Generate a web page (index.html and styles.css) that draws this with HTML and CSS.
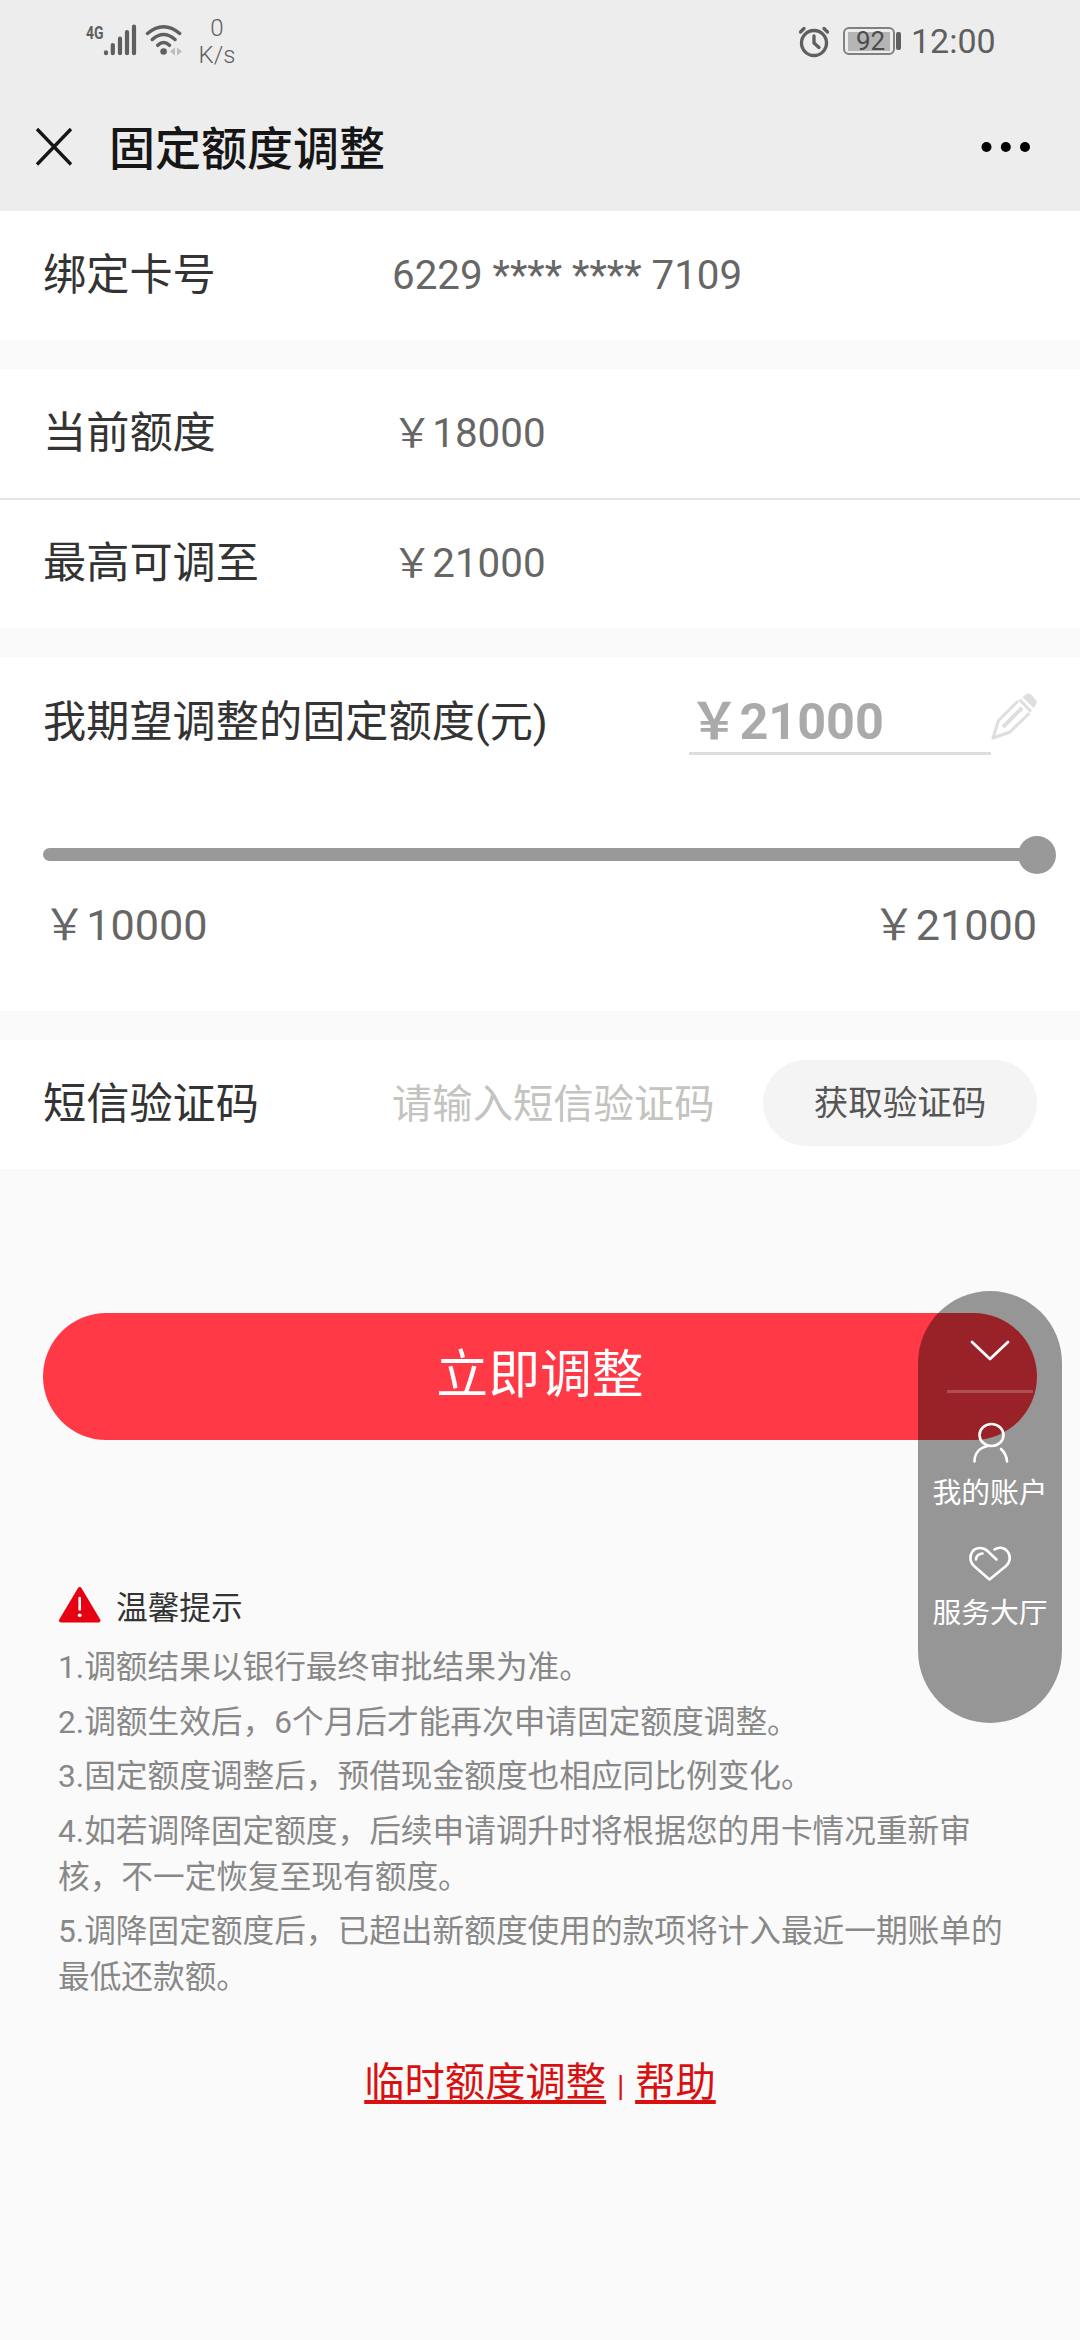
FILE: index.html
```html
<!DOCTYPE html>
<html lang="zh-CN">
<head>
<meta charset="utf-8">
<title>固定额度调整</title>
<link rel="stylesheet" href="styles.css">
</head>
<body>
<header class="top">
  <div class="status">
    <svg class="signal" width="102" height="40" viewBox="0 0 102 40">
      <g fill="none" stroke="#5f5f5f" stroke-width="4.200" stroke-linecap="round">
        <path d="M24 31.300v.9M30.800 24v8.200M38 17.700v14.500M45 11v21.200M52 5.700v26.500"/>
        <path d="M65.500 12.500Q81.600-1 97.700 12.500M70.300 18.500Q81.600 8.500 93 18.500M75.800 24.300Q81.600 18.700 87.400 24.300" stroke-width="3.500"/>
      </g>
      <circle cx="81.600" cy="30.500" r="3.300" fill="#5f5f5f"/>
      <path d="M93 26.500v8l-5-4zM95 26.500v8l5-4z" fill="#bdbdbd"/>
      <text class="net" x="4" y="18" textLength="17.500" lengthAdjust="spacingAndGlyphs">4G</text>
    </svg>
    <div class="speed"><span>0</span><span>K/s</span></div>
    <svg class="alarm" width="32" height="34" viewBox="0 0 32 34">
      <g fill="none" stroke="#5f5f5f" stroke-width="3.300" stroke-linecap="round" stroke-linejoin="round">
        <circle cx="16" cy="19" r="12.500"/>
        <path d="M16 12v7l5 4.500"/>
        <path d="M2.500 8 6 4.500M29.500 8 26 4.500"/>
      </g>
    </svg>
    <div class="battery"><span class="level">92</span></div>
    <span class="clock">12:00</span>
  </div>
  <div class="nav">
    <svg width="38" height="40" viewBox="0 0 38 40"><path d="M2 2 36 37.500M36 2 2 37.500" fill="none" stroke="#161616" stroke-width="3.300"/></svg>
    <h1 class="title">固定额度调整</h1>
    <svg class="more" width="50" height="12" viewBox="0 0 50 12"><circle cx="5.500" cy="6" r="5"/><circle cx="24.800" cy="6" r="5"/><circle cx="44" cy="6" r="5"/></svg>
  </div>
</header>

<main>
  <section class="card">
    <div class="row"><span class="label">绑定卡号</span><span class="value">6229 **** **** 7109</span></div>
  </section>
  <section class="card">
    <div class="row"><span class="label">当前额度</span><span class="value">￥18000</span></div>
    <div class="row divided"><span class="label">最高可调至</span><span class="value">￥21000</span></div>
  </section>
  <section class="card adjust">
    <div class="want">
      <span class="label">我期望调整的固定额度(元)</span>
      <span class="amount">￥21000</span>
      <svg class="pencil" width="46" height="48" viewBox="0 0 46 48">
        <g fill="none" stroke="#dedede" stroke-width="3" stroke-linejoin="round">
          <path d="M27 8 7.500 27.500 2 45l17-6L38.500 20"/>
          <path d="M12 34 31 15" stroke-width="4"/>
          <path d="M28.500 6.500 40 18.500"/>
        </g>
        <path d="M31.500 4 35 1.200q3-1.500 5.500.8l4 4.300q2 2.700.5 5.200L42.500 15z" fill="#dedede"/>
      </svg>
    </div>
    <div class="slider"><span class="knob"></span></div>
    <div class="range"><span>￥10000</span><span>￥21000</span></div>
  </section>
  <section class="card">
    <div class="row"><span class="label">短信验证码</span><span class="hint">请输入短信验证码</span><button class="code">获取验证码</button></div>
  </section>

  <button class="submit">立即调整</button>

  <section class="tips">
    <h2 class="tips-title">
      <svg width="44" height="38" viewBox="0 0 44 38"><path d="M21.700 3 40.500 34.500H3z" fill="#e60012" stroke="#e60012" stroke-width="4" stroke-linejoin="round"/><path d="M21.700 12v11.500" stroke="#fff" stroke-width="2.600" stroke-linecap="round"/><circle cx="21.700" cy="29.300" r="1.900" fill="#fff"/></svg>
      <span>温馨提示</span>
    </h2>
    <p>1.调额结果以银行最终审批结果为准。</p>
    <p>2.调额生效后，6个月后才能再次申请固定额度调整。</p>
    <p>3.固定额度调整后，预借现金额度也相应同比例变化。</p>
    <p>4.如若调降固定额度，后续申请调升时将根据您的用卡情况重新审<br>核，不一定恢复至现有额度。</p>
    <p>5.调降固定额度后，已超出新额度使用的款项将计入最近一期账单的<br>最低还款额。</p>
  </section>

  <nav class="links"><a>临时额度调整</a><span class="bar">|</span><a>帮助</a></nav>
</main>

<aside class="float">
  <svg width="40" height="22" viewBox="0 0 40 22"><path d="M2 2 20 19 38 2" fill="none" stroke="#fff" stroke-width="2.800" stroke-linecap="round" stroke-linejoin="round"/></svg>
  <span class="rule"></span>
  <svg width="40" height="42" viewBox="0 0 40 42"><g fill="none" stroke="#fff" stroke-width="2.600" stroke-linecap="round"><ellipse cx="21.500" cy="13" rx="12" ry="11"/><path d="M4.500 39.500C4.500 31 10 25.500 18 24M31 27q5.500 5 6 12.500"/></g></svg>
  <span class="entry">我的账户</span>
  <svg class="heart" width="44" height="36" viewBox="0 0 44 36"><g fill="none" stroke="#fff" stroke-width="2.600" stroke-linecap="round" stroke-linejoin="round"><path d="M28.500 13.500 19.500 5C14.500 .5 7.500 1.500 4.500 5.500S1.500 16 6 20L21.500 33.500 38 20c4.500-4 5-10 1.500-14.500S30.500 .8 26.500 3.500"/><path d="M8 13.500Q8.500 8 14.500 7.500"/></g></svg>
  <span class="entry">服务大厅</span>
</aside>
</body>
</html>
```
FILE: styles.css
```css
* { box-sizing: border-box; }

body {
  margin: 0;
  position: relative;
  height: 2340px;
  overflow: hidden;
  background: #fafafa;
  color: #333;
  font-family: Roboto, "Noto Sans CJK SC", sans-serif;
}

button { border: 0; padding: 0; font-family: inherit; }

.top { height: 211px; background: #ededed; }

.status {
  display: flex;
  align-items: center;
  height: 82px;
  padding: 0 85px 0 82px;
  color: #5f5f5f;
}

.net { font: bold 19px Roboto, sans-serif; fill: #5f5f5f; }

.speed {
  display: flex;
  flex-direction: column;
  align-items: center;
  width: 36px;
  margin-left: 15px;
  padding-top: 2px;
  font-size: 24px;
  font-weight: 300;
  line-height: 27px;
}

.alarm { margin-left: auto; }

.battery {
  position: relative;
  width: 52px;
  height: 28px;
  margin-left: 13px;
  padding: 3px;
  border: 2px solid #808080;
  border-radius: 6px;
}

.battery::after {
  content: "";
  position: absolute;
  left: 51px;
  top: 3px;
  width: 5px;
  height: 18px;
  border-radius: 2px;
  background: #5f5f5f;
}

.level {
  display: block;
  width: 42px;
  height: 19px;
  padding-left: 3px;
  background: #b5b5b5;
  color: #4c4c4c;
  font-size: 26px;
  line-height: 19px;
  text-align: center;
}

.clock { width: 84px; margin-left: 16px; font-size: 34px; }

.nav { display: flex; align-items: center; height: 129px; padding: 0 49px 0 35px; }

.title { margin: 0 0 0 36px; padding-top: 5px; font-size: 46px; font-weight: 500; line-height: 60px; color: #161616; }

.more { margin-left: auto; }

.card { margin-bottom: 29px; background: #fff; }

.row { display: flex; align-items: center; height: 129px; padding: 0 43px; }

.divided { height: 130px; border-top: 2px solid #e6e6e6; }

.label { width: 349px; font-size: 43.200px; line-height: 60px; white-space: nowrap; }

.value { font-size: 40.320px; line-height: 60px; color: #666; }

.adjust { height: 354px; padding: 0 43px; }

.want { display: flex; align-items: center; height: 131px; }

.want .label { width: 646px; }

.amount {
  width: 302px;
  height: 64px;
  margin-top: 1px;
  border-bottom: 3px solid #ddd;
  color: #aaa;
  font-size: 50.400px;
  font-weight: bold;
  line-height: 61px;
}

.pencil { margin-top: -11px; }

.slider {
  display: flex;
  align-items: center;
  justify-content: flex-end;
  height: 13px;
  margin-top: 60px;
  border-radius: 7px;
  background: #999;
}

.knob { flex: none; width: 38px; height: 38px; margin-right: -19px; border-radius: 50%; background: #999; }

.range {
  display: flex;
  justify-content: space-between;
  margin-top: 35px;
  color: #666;
  font-size: 43.200px;
  line-height: 60px;
}

.hint { font-size: 40.320px; line-height: 60px; color: #c3c3c0; }

.code {
  width: 274px;
  height: 86px;
  margin: 0 0 3px auto;
  border-radius: 43px;
  background: #f4f4f4;
  color: #555;
  font-size: 34.560px;
  line-height: 86px;
}

.submit {
  display: block;
  width: 994px;
  height: 127px;
  margin: 144px 43px 0;
  padding-bottom: 2px;
  border-radius: 64px;
  background: #ff3945;
  color: #fff;
  font-size: 51.840px;
  line-height: 125px;
}

.tips { padding: 146px 58px 0; font-size: 31.680px; line-height: 46px; color: #888; }

.tips-title { display: flex; gap: 14px; align-items: center; height: 46px; margin: 0 0 13px; color: #333; font-size: inherit; font-weight: 400; }

.tips-title svg { margin-bottom: 8px; }

.tips p { margin: 0 0 8.500px; white-space: nowrap; }

.links { display: flex; justify-content: center; align-items: baseline; margin-top: 52px; color: #d91010; font-size: 40.320px; line-height: 60px; }

.links a { text-decoration: underline; text-decoration-thickness: 4px; text-underline-offset: 4px; text-decoration-skip-ink: none; }

.bar { width: 29px; font-size: 30px; text-align: center; }

.float {
  position: absolute;
  left: 918px;
  top: 1291px;
  width: 144px;
  height: 432px;
  padding-top: 49px;
  display: flex;
  flex-direction: column;
  align-items: center;
  border-radius: 72px;
  background: rgba(0, 0, 0, .4);
  color: #fff;
  font-size: 28.800px;
}

.rule { width: 86px; height: 3px; margin: 28px 0 29px; background: rgba(255, 255, 255, .2); }

.entry { line-height: 40px; margin-top: 9px; }

.heart { margin: 33px 0 2px; }
```
